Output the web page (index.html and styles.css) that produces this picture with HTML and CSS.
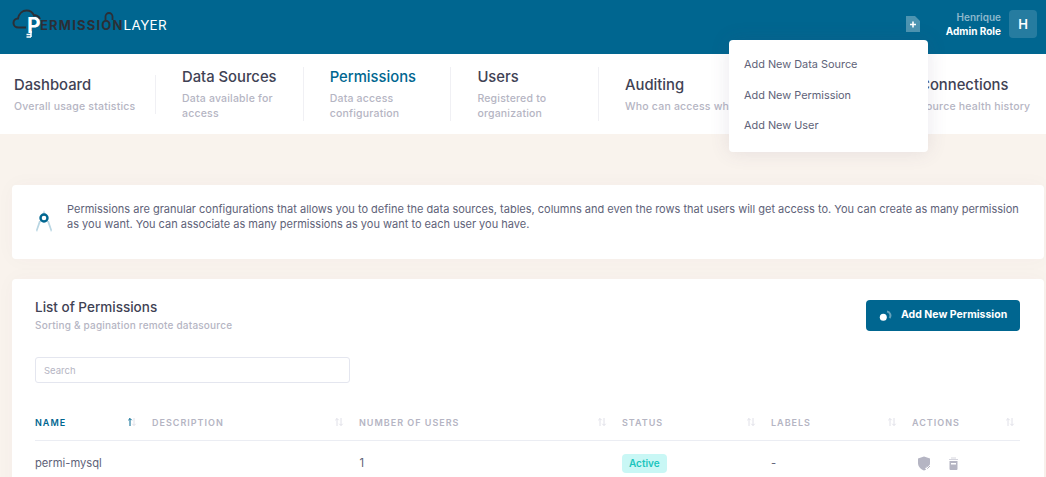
FILE: index.html
```html
<!DOCTYPE html>
<html lang="en">
<head>
    <meta charset="UTF-8">
    <meta name="viewport" content="width=device-width, initial-scale=1.0">
    <title>Permissions - PermissionLayer</title>
    <link rel="stylesheet" href="styles.css">
</head>
<body>
    <svg class="sprite" width="0" height="0">
        <symbol id="sort" viewBox="0 0 10 10">
            <path class="sort-up" d="M3 9V1.5M1.3 3.2 3 1.5l1.7 1.7" fill="none" stroke-width="1"/>
            <path class="sort-down" d="M7 1v7.5M5.3 6.8 7 8.5l1.7-1.7" fill="none" stroke-width="1"/>
        </symbol>
    </svg>

    <!-- top bar -->
    <header class="topbar">
        <a class="logo" href="#">
            <svg class="logo-art" width="110" height="30" viewBox="0 0 110 30">
                <path d="M14 18.500H6.500C3.500 18.500 1.500 16.500 1.500 14s2-4.500 4.500-4.500C7 4.500 10.500 1.500 14.500 1.500c4 0 6.500 2.500 7.500 5 1.500-.5 5 .3 6 3.500" fill="none" stroke="#2b2f36" stroke-width="2"/>
                <path d="M93.500 11V7.500a3.500 3.500 0 0 1 7 0V11" fill="none" stroke="#2b2f36" stroke-width="1.800"/>
                <path d="M19 22v6M14.500 25.500H19M14.500 28H19" fill="none" stroke="#fff" stroke-width="1.500"/>
            </svg>
            <span class="logo-p">P</span><span class="logo-dark">ERMISSION</span><span class="logo-light">LAYER</span>
        </a>
        <div class="topbar-right">
            <svg class="add-doc" width="14" height="16" viewBox="0 0 14 16">
                <path d="M0 0h9l5 5v11H0z" fill="#fff" fill-opacity=".3"/>
                <path d="M7 5.500v6M4 8.500h6" stroke="#fff" stroke-width="1.600"/>
            </svg>
            <div class="user">
                <div class="user-name">Henrique</div>
                <div class="user-role">Admin Role</div>
            </div>
            <div class="avatar">H</div>
        </div>
        <ul class="add-menu">
            <li>Add New Data Source</li>
            <li>Add New Permission</li>
            <li>Add New User</li>
        </ul>
    </header>

    <!-- section tabs -->
    <nav class="tabs">
        <a class="tab tab-first" href="#">
            <div class="tab-title">Dashboard</div>
            <div class="tab-sub">Overall usage statistics</div>
        </a>
        <a class="tab" href="#">
            <div class="tab-title">Data Sources</div>
            <div class="tab-sub">Data available for access</div>
        </a>
        <a class="tab tab-active" href="#">
            <div class="tab-title">Permissions</div>
            <div class="tab-sub">Data access configuration</div>
        </a>
        <a class="tab" href="#">
            <div class="tab-title">Users</div>
            <div class="tab-sub">Registered to organization</div>
        </a>
        <a class="tab tab-wide" href="#">
            <div class="tab-title">Auditing</div>
            <div class="tab-sub">Who can access what and when</div>
        </a>
        <a class="tab tab-last" href="#">
            <div class="tab-title">Connections</div>
            <div class="tab-sub">Source health history</div>
        </a>
    </nav>

    <main class="content">
        <section class="card info">
            <svg class="info-icon" width="16" height="24" viewBox="0 0 16 24">
                <path d="M8 0 10 6H6z" fill="#b9d6e3"/>
                <path d="M5 11 1 22l-1-2 3-9zM11 11l4 11 1-2-3-9z" fill="#b9d6e3"/>
                <circle cx="8" cy="8" r="3.500" fill="#fff" stroke="#006690" stroke-width="2.400"/>
            </svg>
            <p class="info-text">Permissions are granular configurations that allows you to define the data sources, tables, columns and even the rows that users will get access to. You can create as many permission<br>as you want. You can associate as many permissions as you want to each user you have.</p>
        </section>

        <section class="card list">
            <div class="list-head">
                <div>
                    <h2 class="list-title">List of Permissions</h2>
                    <div class="list-sub">Sorting &amp; pagination remote datasource</div>
                </div>
                <button class="add-btn">
                    <svg width="14" height="14" viewBox="0 0 14 14">
                        <path d="M9 3.500a4 4 0 0 1 2.500 6.500" fill="none" stroke="#fff" stroke-opacity=".4" stroke-width="2"/>
                        <circle cx="5.300" cy="9.200" r="3.500" fill="#fff"/>
                    </svg>
                    Add New Permission
                </button>
            </div>
            <input class="search" type="text" placeholder="Search">
            <table class="perm-table">
                <thead>
                    <tr>
                        <th class="col-name sorted">Name <svg class="sort" width="10" height="10"><use href="#sort"/></svg></th>
                        <th class="col-desc">Description <svg class="sort" width="10" height="10"><use href="#sort"/></svg></th>
                        <th class="col-users">Number of users <svg class="sort" width="10" height="10"><use href="#sort"/></svg></th>
                        <th class="col-status">Status <svg class="sort" width="10" height="10"><use href="#sort"/></svg></th>
                        <th class="col-labels">Labels <svg class="sort" width="10" height="10"><use href="#sort"/></svg></th>
                        <th class="col-actions">Actions <svg class="sort" width="10" height="10"><use href="#sort"/></svg></th>
                    </tr>
                </thead>
                <tbody>
                    <tr>
                        <td>permi-mysql</td>
                        <td></td>
                        <td class="cell-count">1</td>
                        <td><span class="badge">Active</span></td>
                        <td>-</td>
                        <td>
                            <div class="row-actions">
                                <svg width="15" height="15" viewBox="0 0 15 15">
                                    <path d="M7 0.500 13 2.500V7C13 10.500 10.500 13 7 14.500 3.500 13 1 10.500 1 7V2.500z" fill="#b5b5c3"/>
                                    <path d="M9 11.500l1.500 1.500 3-3" fill="none" stroke="#fff" stroke-width="2.500"/>
                                    <path d="M9.500 11.500l1 1 2.500-2.500" fill="none" stroke="#b5b5c3" stroke-width="1"/>
                                </svg>
                                <svg width="11" height="13" viewBox="0 0 11 13">
                                    <path d="M3 .5h5v1H3zM1 2h9v1H1z" fill="#d5d5de"/>
                                    <path d="M1.500 4h8v8a1 1 0 0 1-1 1h-6a1 1 0 0 1-1-1z" fill="#b5b5c3"/>
                                    <path d="M3 6h5v1.500H3z" fill="#fff"/>
                                </svg>
                            </div>
                        </td>
                    </tr>
                </tbody>
            </table>
        </section>
    </main>
</body>
</html>
```

FILE: styles.css
```css
* {
    box-sizing: border-box;
}
html, body {
    height: 100%;
    overflow: hidden;
}
body {
    margin: 0;
    background-color: #f9f3ed;
    color: #3f4254;
    font-family: Inter, "Liberation Sans", sans-serif;
}
a {
    color: inherit;
    text-decoration: none;
}
.sprite {
    display: block;
    height: 0;
}

/* top bar */
.topbar {
    position: relative;
    display: flex;
    align-items: center;
    justify-content: space-between;
    height: 54px;
    padding: 0 9px 0 12px;
    background-color: #006690;
}
.logo {
    position: relative;
    display: flex;
    align-items: flex-start;
    width: 160px;
    height: 30px;
    padding: 4px 0 0 15px;
}
.logo-art {
    position: absolute;
    left: 0;
    top: -3px;
}
.logo-p {
    width: 13px;
    color: #fff;
    font-size: 21px;
    font-weight: 700;
    line-height: 20px;
}
.logo-dark {
    margin-top: 1.500px;
    color: #2b2f36;
    font-size: 13px;
    font-weight: 700;
    line-height: 14px;
    letter-spacing: 1.200px;
}
.logo-light {
    margin-top: 1.500px;
    color: #fff;
    font-size: 13.500px;
    line-height: 14px;
    letter-spacing: 0.3px;
}
.topbar-right {
    display: flex;
    align-items: center;
    padding-bottom: 6px;
}
.add-doc {
    margin-right: 26px;
}
.user {
    margin-right: 8px;
    font-size: 10px;
    font-weight: 600;
    line-height: 14px;
    text-align: right;
}
.user-name {
    color: #8db8cc;
}
.user-role {
    color: #fff;
    font-weight: 700;
}
.avatar {
    display: flex;
    align-items: center;
    justify-content: center;
    width: 28px;
    height: 28px;
    border-radius: 4px;
    background-color: rgba(255, 255, 255, 0.15);
    color: #fff;
    font-size: 13px;
    font-weight: 600;
}
.add-menu {
    position: absolute;
    left: 729px;
    top: 40px;
    z-index: 5;
    width: 199px;
    height: 112px;
    margin: 0;
    padding: 9px 15px;
    border-radius: 4px;
    background-color: #fff;
    box-shadow: 0 0 20px rgba(82, 63, 105, 0.12);
    color: #5e6278;
    font-size: 10.900px;
    line-height: 15px;
    list-style: none;
}
.add-menu li {
    padding: 8px 0 7.500px;
}

/* section tabs */
.tabs {
    display: flex;
    align-items: center;
    height: 80px;
    background-color: #fff;
    overflow: hidden;
}
.tab {
    flex: none;
    width: 147.700px;
    padding: 0 20px 0 26px;
    border-right: 1px solid #f0f0f4;
}
.tab-first {
    width: 156px;
    padding: 0 0 0 14px;
}
.tab-wide {
    width: 294px;
}
.tab-last {
    width: auto;
    padding-right: 0;
    border-right: 0;
}
.tab-title {
    margin-bottom: 4px;
    color: #3f4254;
    font-size: 14.800px;
    font-weight: 500;
    line-height: 20px;
    white-space: nowrap;
}
.tab-sub {
    color: #b5b5c3;
    font-size: 10.500px;
    font-weight: 500;
    line-height: 15px;
    letter-spacing: 0.2px;
}
.tab-wide .tab-sub,
.tab-last .tab-sub,
.tab-first .tab-sub {
    white-space: nowrap;
}
.tab-active .tab-title {
    color: #006690;
}

/* page content */
.content {
    padding: 51px 2px 0 12px;
}
.card {
    border-radius: 4px;
    background-color: #fff;
    box-shadow: 0 0 20px rgba(82, 63, 105, 0.03);
}
.info {
    display: flex;
    align-items: center;
    height: 74px;
    margin-bottom: 20px;
    padding: 0 24px;
}
.info-icon {
    flex: none;
    margin-right: 15px;
}
.info-text {
    margin: 0 0 11px;
    color: #5e6278;
    font-size: 11px;
    line-height: 15px;
    white-space: nowrap;
}
.list {
    padding: 21px 24px 0 23px;
    height: 400px;
}
.list-head {
    display: flex;
    align-items: flex-start;
    justify-content: space-between;
    margin-bottom: 25px;
}
.list-title {
    margin: 0 0 3px;
    color: #3f4254;
    font-size: 13.500px;
    font-weight: 500;
    line-height: 15px;
}
.list-sub {
    color: #b5b5c3;
    font-size: 10px;
    font-weight: 500;
    line-height: 14px;
    letter-spacing: 0.2px;
}
.add-btn {
    display: flex;
    align-items: center;
    gap: 9px;
    width: 154px;
    height: 31px;
    padding: 0 12px 2px;
    border: none;
    border-radius: 4px;
    background-color: #006690;
    color: #fff;
    font-family: inherit;
    font-size: 10.500px;
    font-weight: 700;
    white-space: nowrap;
}
.add-btn svg {
    flex: none;
}
.search {
    display: block;
    width: 315px;
    height: 26px;
    padding: 0 8px;
    border: 1px solid #e4e6ef;
    border-radius: 3px;
    font-family: inherit;
    font-size: 9.500px;
}
.search::placeholder {
    color: #b5b5c3;
}

/* permissions table */
.perm-table {
    width: 985px;
    margin-top: 23px;
    border-collapse: collapse;
    table-layout: fixed;
}
.perm-table th {
    position: relative;
    height: 34px;
    padding: 0;
    border-bottom: 1px solid #ebedf3;
    color: #b5b5c3;
    font-size: 9px;
    font-weight: 600;
    letter-spacing: 1px;
    text-align: left;
    text-transform: uppercase;
}
.perm-table td {
    height: 46px;
    padding: 0;
    color: #5e6278;
    font-size: 11.200px;
}
.perm-table td.cell-count {
    padding-left: 0.4px;
}
.col-name { width: 117px; }
.col-desc { width: 207px; }
.col-users { width: 263px; }
.col-status { width: 149px; }
.col-labels { width: 141px; }
.col-actions { width: 108px; }
.perm-table th.sorted {
    color: #006690;
}
.sort {
    --up: #e0e0e8;
    position: absolute;
    right: 15px;
    top: 11px;
    stroke: #e0e0e8;
}
.sort-up {
    stroke: var(--up);
}
.col-actions .sort {
    right: 5px;
}
.sorted .sort {
    --up: #006690;
}
.badge {
    display: inline-block;
    padding: 3px 7px;
    border-radius: 4px;
    background-color: #c9f7f5;
    color: #1bc5bd;
    font-size: 10px;
    font-weight: 600;
    line-height: 13px;
}
.row-actions {
    display: flex;
    align-items: center;
    gap: 16px;
    padding-left: 5px;
}
```
